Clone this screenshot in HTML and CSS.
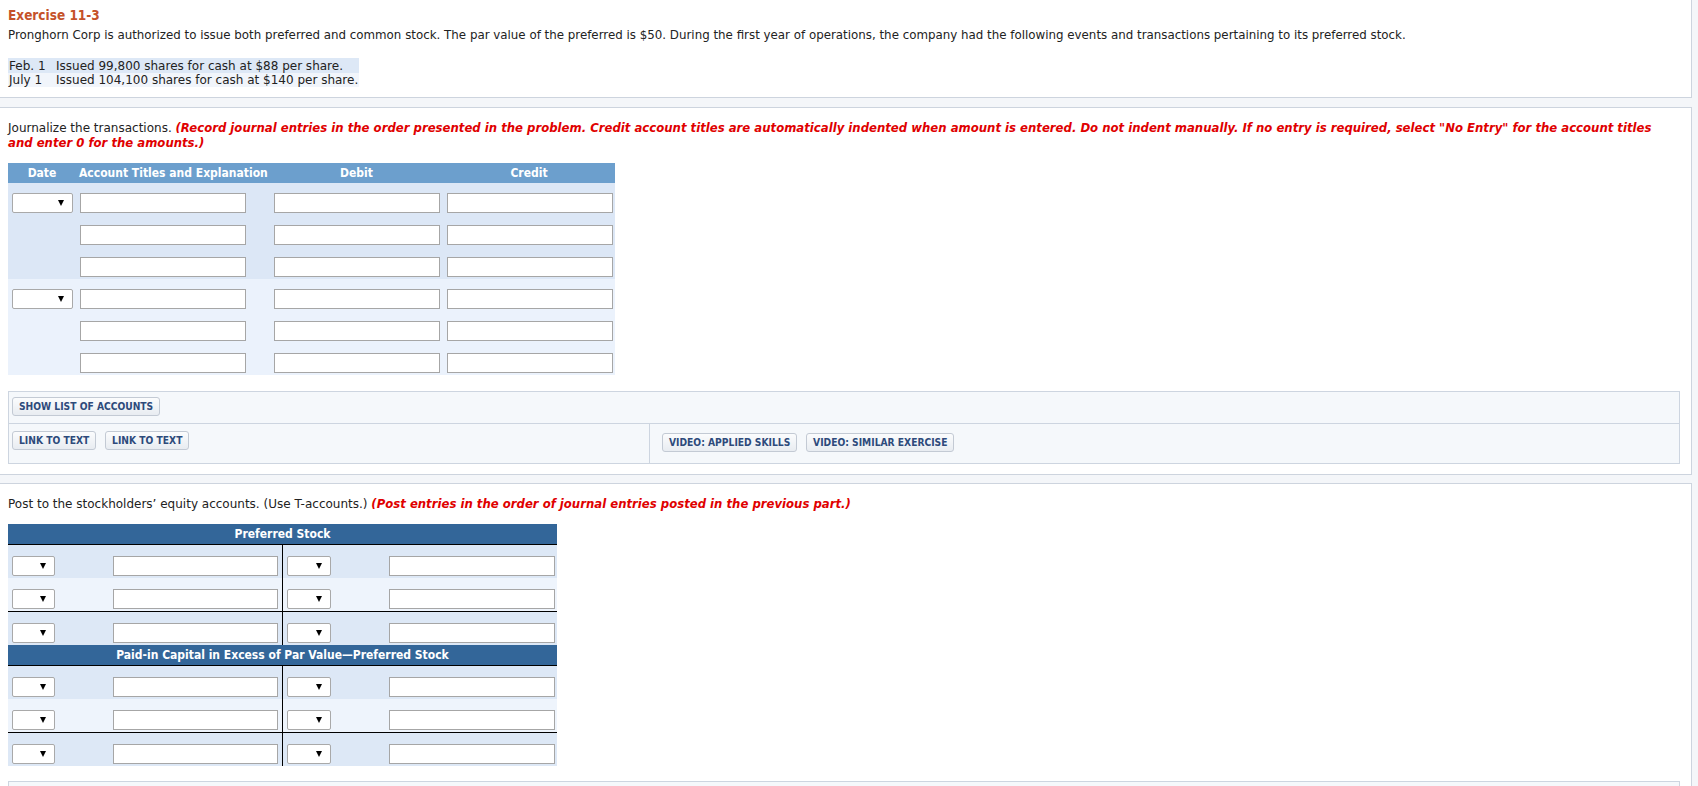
FILE: index.html
```html
<!DOCTYPE html>
<html lang="en">
<head>
    <meta charset="UTF-8">
    <meta name="viewport" content="width=device-width, initial-scale=1.0">
    <title>Exercise 11-3</title>
    <link rel="stylesheet" href="styles.css">
</head>
<body>
    <div class="panel panel-intro">
        <h1 class="exercise-title">Exercise 11-3</h1>
        <p class="problem">Pronghorn Corp is authorized to issue both preferred and common stock. The par value of the preferred is $50. During the first year of operations, the company had the following events and transactions pertaining to its preferred stock.</p>
        <table class="events">
            <tr class="shaded">
                <td class="ev-date">Feb. 1</td>
                <td class="ev-text">Issued 99,800 shares for cash at $88 per share.</td>
            </tr>
            <tr>
                <td class="ev-date">July 1</td>
                <td class="ev-text">Issued 104,100 shares for cash at $140 per share.</td>
            </tr>
        </table>
    </div>

    <div class="panel panel-journal">
        <p class="instructions">Journalize the transactions. <em class="note">(Record journal entries in the order presented in the problem. Credit account titles are automatically indented when amount is entered. Do not indent manually. If no entry is required, select "No Entry" for the account titles<br>and enter 0 for the amounts.)</em></p>

        <div class="journal">
            <div class="journal-head">
                <span class="jh-date">Date</span>
                <span class="jh-acct">Account Titles and Explanation</span>
                <span class="jh-amount">Debit</span>
                <span class="jh-amount">Credit</span>
            </div>

            <div class="entry entry-a">
                <div class="jrow">
                    <div class="cell"><div class="select"><span class="caret"></span></div></div>
                    <div class="cell"><input type="text" class="field"></div>
                    <div class="cell"><input type="text" class="field"></div>
                    <div class="cell"><input type="text" class="field"></div>
                </div>
                <div class="jrow">
                    <div class="cell"></div>
                    <div class="cell"><input type="text" class="field"></div>
                    <div class="cell"><input type="text" class="field"></div>
                    <div class="cell"><input type="text" class="field"></div>
                </div>
                <div class="jrow">
                    <div class="cell"></div>
                    <div class="cell"><input type="text" class="field"></div>
                    <div class="cell"><input type="text" class="field"></div>
                    <div class="cell"><input type="text" class="field"></div>
                </div>
            </div>

            <div class="entry entry-b">
                <div class="jrow">
                    <div class="cell"><div class="select"><span class="caret"></span></div></div>
                    <div class="cell"><input type="text" class="field"></div>
                    <div class="cell"><input type="text" class="field"></div>
                    <div class="cell"><input type="text" class="field"></div>
                </div>
                <div class="jrow">
                    <div class="cell"></div>
                    <div class="cell"><input type="text" class="field"></div>
                    <div class="cell"><input type="text" class="field"></div>
                    <div class="cell"><input type="text" class="field"></div>
                </div>
                <div class="jrow">
                    <div class="cell"></div>
                    <div class="cell"><input type="text" class="field"></div>
                    <div class="cell"><input type="text" class="field"></div>
                    <div class="cell"><input type="text" class="field"></div>
                </div>
            </div>
        </div>

        <div class="tools">
            <div class="tools-top">
                <button class="btn">SHOW LIST OF ACCOUNTS</button>
            </div>
            <div class="tools-bottom">
                <div class="tools-left">
                    <button class="btn">LINK TO TEXT</button>
                    <button class="btn">LINK TO TEXT</button>
                </div>
                <div class="tools-right">
                    <button class="btn">VIDEO: APPLIED SKILLS</button>
                    <button class="btn">VIDEO: SIMILAR EXERCISE</button>
                </div>
            </div>
        </div>
    </div>

    <div class="panel panel-post">
        <p class="instructions">Post to the stockholders’ equity accounts. (Use T-accounts.) <em class="note">(Post entries in the order of journal entries posted in the previous part.)</em></p>

        <div class="taccount">
            <div class="t-head">Preferred Stock</div>
            <div class="trow trow-dark">
                <div class="t-side t-left"><div class="select select-sm"><span class="caret"></span></div><input type="text" class="field field-t"></div>
                <div class="t-side t-right"><div class="select select-sm"><span class="caret"></span></div><input type="text" class="field field-t"></div>
            </div>
            <div class="trow trow-light">
                <div class="t-side t-left"><div class="select select-sm"><span class="caret"></span></div><input type="text" class="field field-t"></div>
                <div class="t-side t-right"><div class="select select-sm"><span class="caret"></span></div><input type="text" class="field field-t"></div>
            </div>
            <div class="trow trow-dark trow-total">
                <div class="t-side t-left"><div class="select select-sm"><span class="caret"></span></div><input type="text" class="field field-t"></div>
                <div class="t-side t-right"><div class="select select-sm"><span class="caret"></span></div><input type="text" class="field field-t"></div>
            </div>
        </div>

        <div class="taccount">
            <div class="t-head">Paid-in Capital in Excess of Par Value—Preferred Stock</div>
            <div class="trow trow-dark">
                <div class="t-side t-left"><div class="select select-sm"><span class="caret"></span></div><input type="text" class="field field-t"></div>
                <div class="t-side t-right"><div class="select select-sm"><span class="caret"></span></div><input type="text" class="field field-t"></div>
            </div>
            <div class="trow trow-light">
                <div class="t-side t-left"><div class="select select-sm"><span class="caret"></span></div><input type="text" class="field field-t"></div>
                <div class="t-side t-right"><div class="select select-sm"><span class="caret"></span></div><input type="text" class="field field-t"></div>
            </div>
            <div class="trow trow-dark trow-total">
                <div class="t-side t-left"><div class="select select-sm"><span class="caret"></span></div><input type="text" class="field field-t"></div>
                <div class="t-side t-right"><div class="select select-sm"><span class="caret"></span></div><input type="text" class="field field-t"></div>
            </div>
        </div>

        <div class="tools tools-post">
            <div class="tools-top">
                <button class="btn">SHOW LIST OF ACCOUNTS</button>
            </div>
        </div>
    </div>
</body>
</html>
```

FILE: styles.css
```css
body {
    margin: 0;
    background-color: #f4f6f9;
    font-family: "DejaVu Sans", Verdana, sans-serif;
    font-size: 12px;
    color: #222;
}
.panel {
    width: 1692px;
    box-sizing: border-box;
    background-color: #fff;
    border: 1px solid #cdd4de;
    border-left: 0;
    padding: 0 11px 10px 8px;
    margin-bottom: 9px;
}
.panel-intro {
    border-top: 0;
    padding-top: 7px;
}
.panel-journal {
    padding-top: 13px;
    margin-bottom: 8px;
}
.panel-post {
    padding-top: 13px;
    margin-bottom: 0;
}
.exercise-title {
    margin: 0;
    font-family: "DejaVu Sans Condensed", "DejaVu Sans", sans-serif;
    font-stretch: condensed;
    font-size: 13.5px;
    line-height: 16px;
    color: #c5522a;
}
.problem {
    margin: 4px 0 0;
    font-size: 11.85px;
    line-height: 16px;
}
.events {
    margin-top: 15px;
    border-collapse: collapse;
    line-height: 14px;
}
.events td {
    padding: 0 1px;
    white-space: nowrap;
}
.events .shaded td {
    background-color: #dde8f6;
    height: 15px;
}
.events tr:last-child td {
    background-color: #f1f5fb;
}
.ev-date {
    width: 45px;
}
.instructions {
    margin: 0;
    line-height: 15px;
}
.note {
    color: #e00000;
    font-weight: bold;
    font-size: 11.7px;
}

/* journal */
.journal {
    width: 607px;
    margin-top: 12px;
}
.journal-head,
.jrow {
    display: grid;
    grid-template-columns: 68px 194px 173px 172px;
}
.journal-head {
    height: 20px;
    align-items: center;
    background-color: #6c9fcd;
    color: #fff;
    font-family: "DejaVu Sans Condensed", "DejaVu Sans", sans-serif;
    font-stretch: condensed;
    font-weight: bold;
    font-size: 12px;
}
.jh-date,
.jh-amount {
    text-align: center;
}
.jh-acct {
    padding-left: 3px;
}
.entry-a {
    background-color: #dce7f6;
}
.entry-b {
    background-color: #ebf2fc;
}
.jrow {
    height: 32px;
    box-sizing: border-box;
    padding-top: 10px;
}
.jrow .cell {
    padding-left: 4px;
}
.field {
    display: block;
    width: 166px;
    height: 20px;
    box-sizing: border-box;
    margin: 0;
    padding: 0 3px;
    border: 1px solid #a6a6a6;
    background-color: #fff;
}
.select {
    width: 61px;
    height: 20px;
    box-sizing: border-box;
    display: flex;
    align-items: center;
    justify-content: flex-end;
    padding-right: 8px;
    border: 1px solid #a9a9a9;
    border-radius: 2px;
    background-color: #fff;
}
.caret {
    width: 0;
    height: 0;
    border-left: 3px solid transparent;
    border-right: 3px solid transparent;
    border-top: 6px solid #000;
}

/* buttons box */
.tools {
    margin-top: 16px;
    border: 1px solid #cdd5e0;
    background-color: #f5f8fb;
}
.tools-post {
    margin-top: 15px;
}
.tools-top {
    padding: 5px 3px 7px;
    border-bottom: 1px solid #cdd5e0;
}
.tools-bottom {
    display: flex;
    height: 39px;
}
.tools-left {
    width: 640px;
    padding: 7px 3px 0;
    box-sizing: border-box;
}
.tools-right {
    flex: 1;
    padding: 9px 12px 0;
    border-left: 1px solid #cdd5e0;
}
.btn {
    height: 19px;
    padding: 0 6px;
    margin: 0 5px 0 0;
    vertical-align: top;
    border: 1px solid #c3cad4;
    border-radius: 3px;
    background: linear-gradient(#fbfcfd, #e8ecf1);
    color: #2d4a7b;
    font-family: "DejaVu Sans Condensed", "DejaVu Sans", sans-serif;
    font-stretch: condensed;
    font-weight: bold;
    font-size: 10.2px;
    cursor: pointer;
}

/* T-accounts */
.taccount {
    width: 549px;
}
.panel-post .taccount:first-of-type {
    margin-top: 12px;
}
.t-head {
    height: 20px;
    line-height: 20px;
    text-align: center;
    background-color: #336699;
    color: #fff;
    border-bottom: 1px solid #000;
    font-family: "DejaVu Sans Condensed", "DejaVu Sans", sans-serif;
    font-stretch: condensed;
    font-weight: bold;
    font-size: 12px;
}
.trow {
    display: grid;
    grid-template-columns: 275px 274px;
    height: 33px;
}
.trow-dark {
    background-color: #dde8f6;
}
.trow-light {
    background-color: #eef4fc;
}
.trow-total {
    border-top: 1px solid #000;
}
.t-side {
    display: flex;
    align-items: flex-start;
    padding: 11px 0 0 4px;
}
.t-left {
    border-right: 1px solid #000;
}
.select-sm {
    width: 43px;
    margin-right: 58px;
}
.t-right .select-sm {
    width: 44px;
}
.field-t {
    width: 165px;
}
.t-right .field-t {
    width: 166px;
}
```
